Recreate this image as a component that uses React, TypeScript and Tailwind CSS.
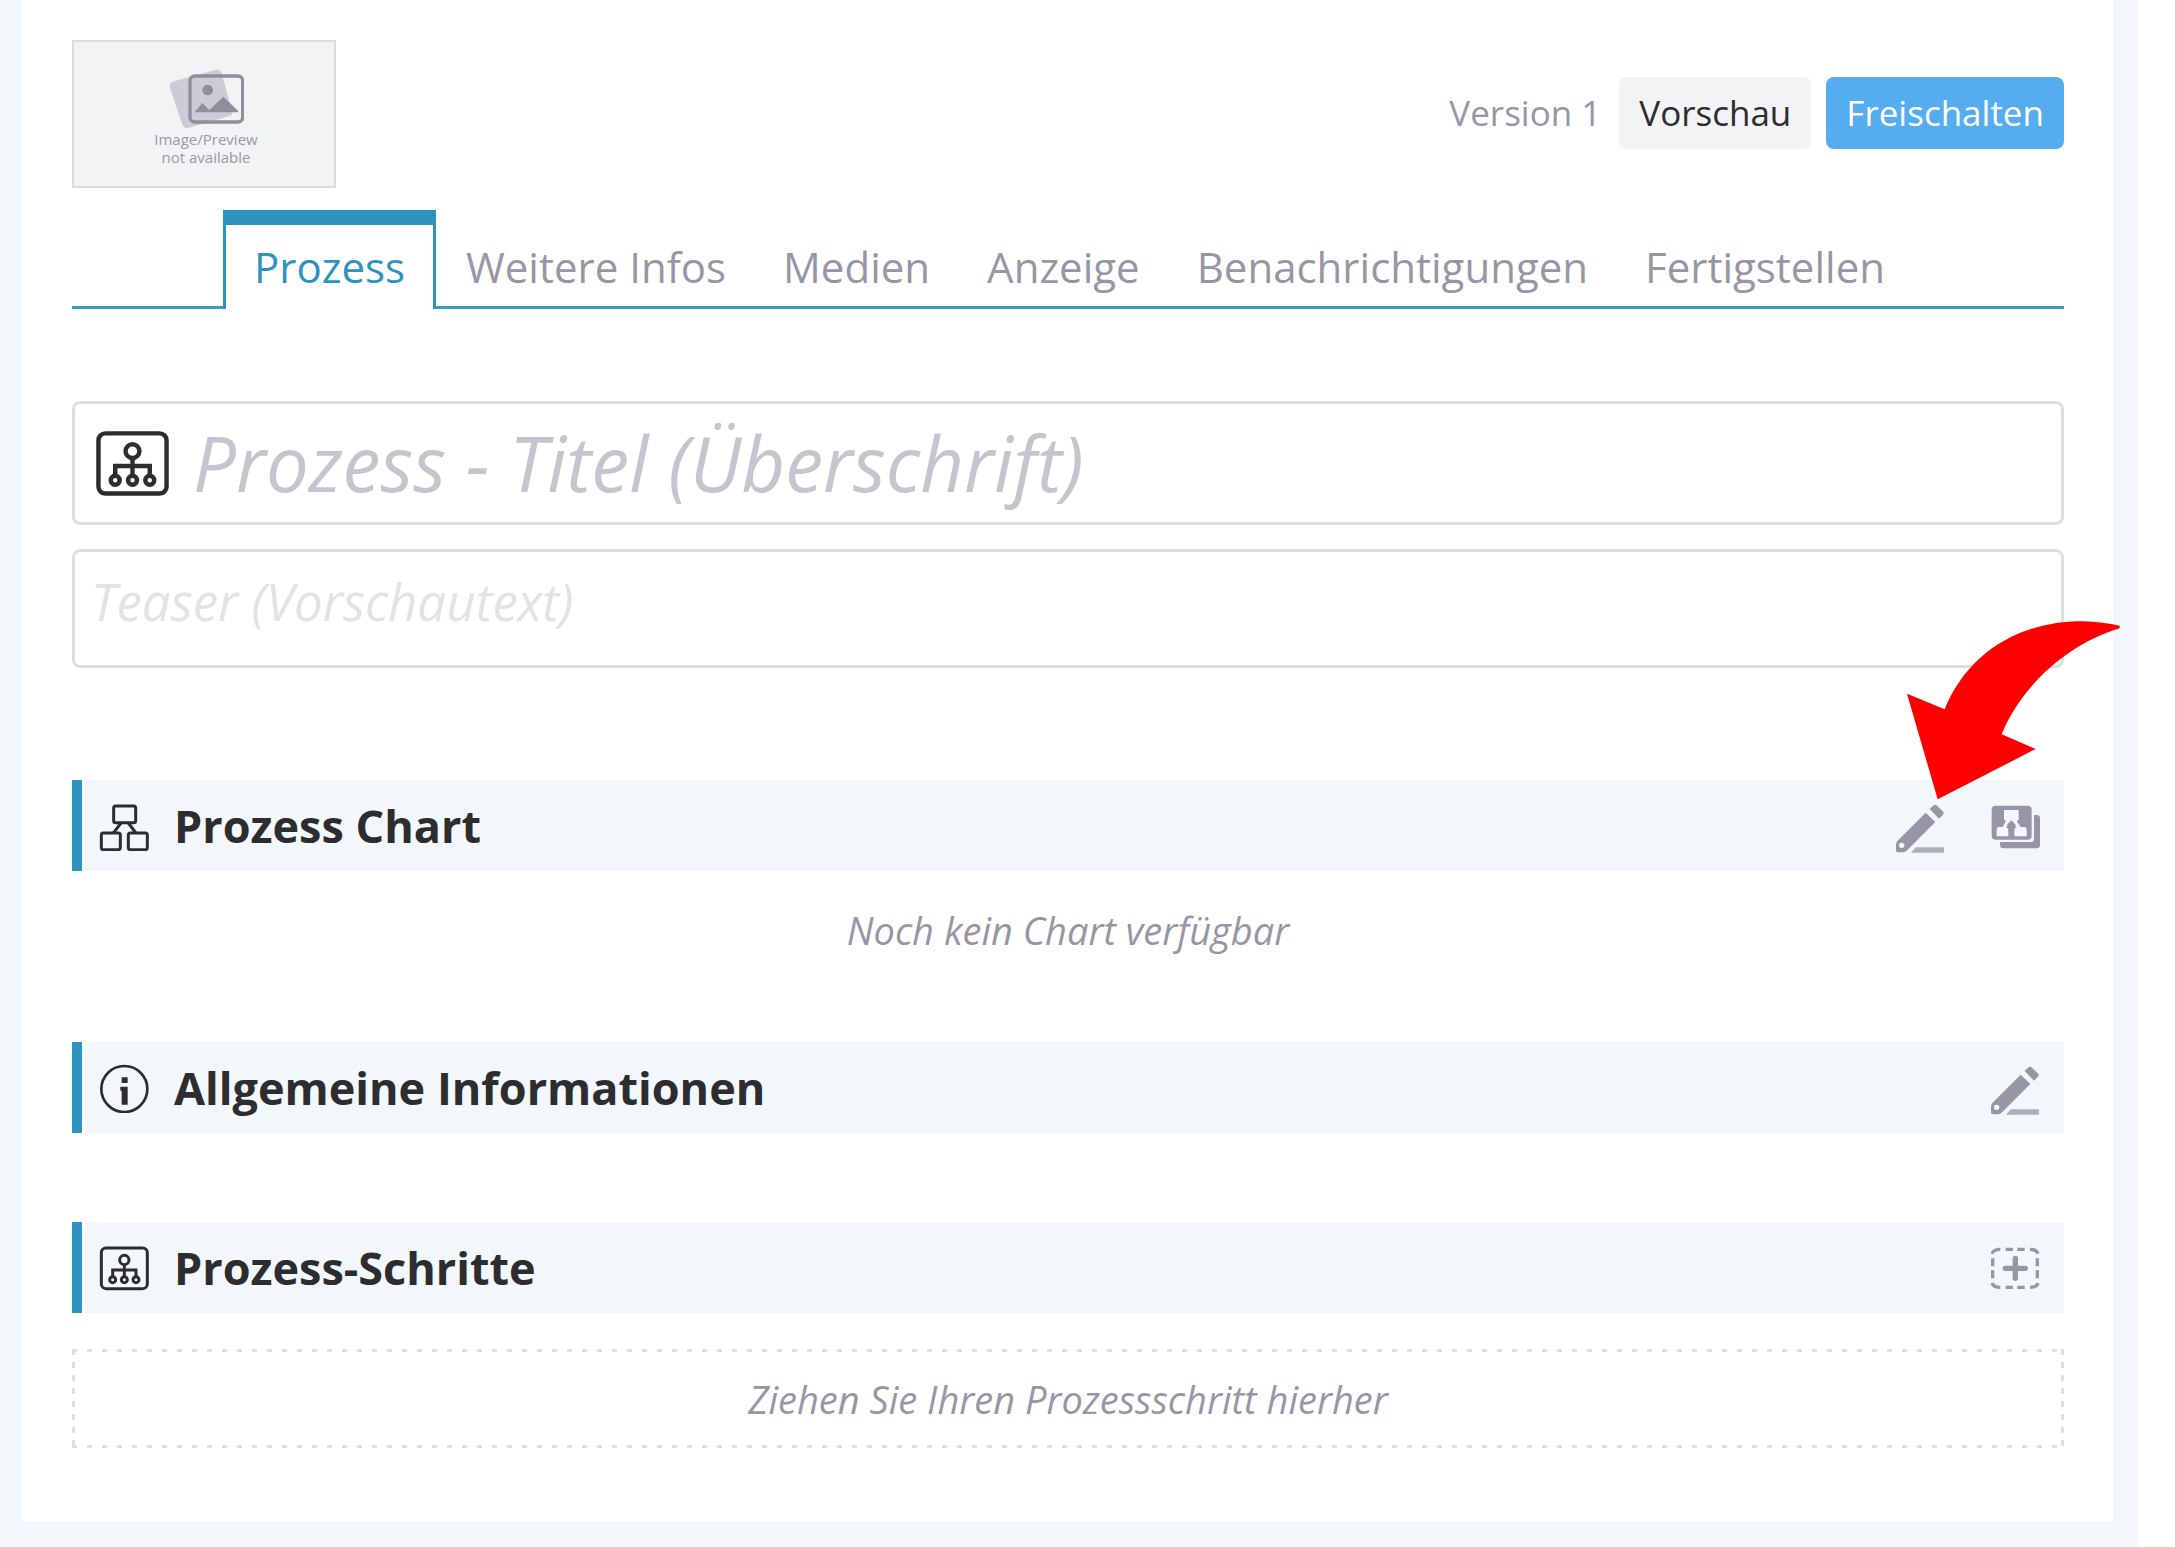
import type { ReactNode } from "react";

const tabs = ["Prozess", "Weitere Infos", "Medien", "Anzeige", "Benachrichtigungen", "Fertigstellen"];

function StepsIcon({ className }: { className: string }) {
  return (
    <svg viewBox="0 6 150 150" className={className} fill="none" stroke="currentColor" strokeWidth="9" aria-hidden="true">
      <rect x="7" y="21" width="138" height="122" rx="14" />
      <circle cx="76" cy="57" r="14" />
      <path d="M76 71V106M41 106V87H111V106" />
      <circle cx="41" cy="116" r="9" />
      <circle cx="76" cy="116" r="9" />
      <circle cx="111" cy="116" r="9" />
    </svg>
  );
}

function ChartIcon() {
  return (
    <svg viewBox="0 0 150 150" className="size-[50px] shrink-0" fill="none" stroke="currentColor" strokeWidth="9" aria-hidden="true">
      <rect x="44" y="15" width="66" height="50" rx="6" />
      <rect x="7" y="96" width="57" height="50" rx="6" />
      <rect x="88" y="96" width="57" height="50" rx="6" />
      <path d="M66 66L44 95M88 66L110 95" />
    </svg>
  );
}

function InfoIcon() {
  return (
    <svg viewBox="0 0 150 150" className="size-[50px] shrink-0" fill="currentColor" aria-hidden="true">
      <circle cx="76" cy="78" r="69" fill="none" stroke="currentColor" strokeWidth="8" />
      <path d="M68 43H86V60H68ZM64 71H86V125H68V83H64Z" />
    </svg>
  );
}

function PencilIcon() {
  return (
    <svg viewBox="0 0 150 150" className="size-[50px] overflow-visible" fill="currentColor" aria-hidden="true">
      <path
        fillRule="evenodd"
        d="M92 35L121 63L37 147Q31 154 25 154H10Q3 154 3 148V130Q3 124 9 118ZM20 125A8 8 0 1 0 20 141A8 8 0 1 0 20 125Z"
      />
      <path d="M104 24L114 14Q120 9 126 14L143 31Q149 36 143 42L132 53Z" />
      <path d="M63 139H147V155H48Z" opacity="0.75" />
    </svg>
  );
}

function GalleryIcon() {
  return (
    <svg viewBox="0 0 150 150" className="size-[50px]" fill="currentColor" aria-hidden="true">
      <path d="M132 42H140Q150 42 150 52V132Q150 142 140 142H40Q30 142 30 132V123H122Q132 123 132 113Z" />
      <path
        fillRule="evenodd"
        d="M17 14H113Q125 14 125 26V104Q125 116 113 116H17Q5 116 5 104V26Q5 14 17 14ZM42 27V56L48 60L38 78H26Q20 78 20 86V106H55V84L49 78L58 66H70L79 78L73 84V106H110V86Q110 78 102 78H92L80 60L86 56V27Z"
      />
      <path d="M64 58L78 72H72V90H56V72H50Z" />
    </svg>
  );
}

function AddIcon() {
  return (
    <svg viewBox="0 0 150 150" className="size-[50px]" fill="none" stroke="currentColor" strokeWidth="10" aria-hidden="true">
      <path d="M6 32Q10 19 31 19M47 19H69M82 19H104M120 19Q140 19 144 32M142 46V70M142 82V106M144 120Q140 133 120 133M104 133H82M69 133H47M31 133Q10 133 6 120M8 106V82M8 70V46" />
      <path d="M46 76H106M76 46V106" strokeWidth="16" strokeLinecap="round" />
    </svg>
  );
}

function Arrow() {
  return (
    <svg
      viewBox="171 62 639 537"
      className="pointer-events-none absolute -top-[159px] -right-14 h-[179px] w-[213px]"
      fill="#ff0000"
      aria-hidden="true"
    >
      <path d="M263 597L171 280L284 327C352 160 505 62 700 63Q760 65 809 76V84C655 130 515 255 455 402L557 446Z" />
    </svg>
  );
}

function SectionBar({ icon, title, children }: { icon: ReactNode; title: string; children: ReactNode }) {
  return (
    <div className="relative flex gap-[3px]">
      <span className="w-[10px] bg-[#2f93bf]" />
      <div className="flex flex-1 items-center gap-[25px] bg-[#f1f7fa] py-4 pr-6 pl-[14px] text-[#2d2d2f]">
        {icon}
        <h2 className="flex-1 text-[45px] leading-[59px] font-bold">{title}</h2>
        <div className="flex gap-[45px] text-[#9896a6]">{children}</div>
      </div>
    </div>
  );
}

export default function App() {
  return (
    <div className="min-h-screen bg-white pr-[37px] font-['Open_Sans',sans-serif]">
      <div className="min-h-screen bg-[#f1f7fa] pr-[25px] pb-[25px] pl-[22px]">
        <main className="bg-white px-[50px] pt-10 pb-[74px] pr-[49px]">
          <header className="flex items-start justify-between">
            <div className="flex h-[148px] w-[264px] flex-col items-center border-2 border-[#dcdcdc] bg-[#f2f3f5] pt-[26px] pl-1 text-[#9a99a5]">
              <svg viewBox="0 0 228 186" className="h-[62px] w-[76px]" aria-hidden="true">
                <path d="M18 40L144 5Q156 2 160 13L192 128Q195 140 185 144L60 180Q48 183 44 172L6 60Q3 45 18 40Z" fill="#cccbd8" />
                <rect x="66" y="24" width="158" height="138" rx="14" fill="none" stroke="#8f8e9b" strokeWidth="10" />
                <circle cx="119" cy="66" r="16" fill="#8f8e9b" />
                <path d="M80 132L103 105L124 126L166 86L210 128V133H80Z" fill="#8f8e9b" />
              </svg>
              <p className="text-center text-[15px] leading-[18px]">
                Image/Preview
                <br />
                not available
              </p>
            </div>
            <div className="flex items-center pt-[37px] text-[35px] leading-[48px]">
              <span className="mr-[18px] text-[#9896a6]">Version 1</span>
              <button type="button" className="mr-[15px] rounded-lg bg-[#f2f3f5] px-5 py-3 text-[#2d2d2f]">
                Vorschau
              </button>
              <button type="button" className="rounded-lg bg-[#55acee] px-5 py-3 text-white">
                Freischalten
              </button>
            </div>
          </header>

          <nav className="mt-[22px] flex text-[42px] leading-[58px] text-[#9896a6]">
            <span className="w-[151px] border-b-3 border-[#3a9dc4]" />
            {tabs.map((tab, i) =>
              i === 0 ? (
                <a key={tab} href="#prozess" aria-current="page" className="border-x-3 border-t-15 border-[#2f93bf] px-7 pt-[13px] pb-[13px] text-[#2f93bf]">
                  {tab}
                </a>
              ) : (
                <a key={tab} href={"#" + tab.toLowerCase().replace(" ", "-")} className="border-b-3 border-[#3a9dc4] pt-7 pr-[27px] pb-[10px] pl-[30px]">
                  {tab}
                </a>
              ),
            )}
            <span className="flex-1 border-b-3 border-[#3a9dc4]" />
          </nav>

          <label className="mt-[92px] flex h-[124px] items-center gap-6 rounded-lg border-3 border-[#dedede] pr-5 pl-5">
            <StepsIcon className="size-[74px] shrink-0 text-[#2d2d2f]" />
            <input
              type="text"
              aria-label="Prozess - Titel (Überschrift)"
              placeholder="Prozess - Titel (Überschrift)"
              className="min-w-0 flex-1 text-[76px] leading-[98px] italic outline-none placeholder:text-[#c5c4cf]"
            />
          </label>
          <textarea
            rows={1}
            aria-label="Teaser (Vorschautext)"
            placeholder="Teaser (Vorschautext)"
            className="mt-6 block h-[119px] w-full resize-none rounded-lg border-3 border-[#dedede] px-4 py-4 text-[51px] leading-[66px] italic outline-none placeholder:text-[#e2e2e7]"
          />

          <section className="mt-[112px]">
            <SectionBar icon={<ChartIcon />} title="Prozess Chart">
              <button type="button" aria-label="Chart bearbeiten">
                <PencilIcon />
              </button>
              <button type="button" aria-label="Chart auswählen">
                <GalleryIcon />
              </button>
              <Arrow />
            </SectionBar>
            <p className="mt-[35px] text-center text-[38px] leading-[48px] text-[#9896a6] italic">Noch kein Chart verfügbar</p>
          </section>

          <section className="mt-[88px]">
            <SectionBar icon={<InfoIcon />} title="Allgemeine Informationen">
              <button type="button" aria-label="Informationen bearbeiten">
                <PencilIcon />
              </button>
            </SectionBar>
          </section>

          <section className="mt-[89px]">
            <SectionBar icon={<StepsIcon className="size-[50px] shrink-0" />} title="Prozess-Schritte">
              <button type="button" aria-label="Schritt hinzufügen">
                <AddIcon />
              </button>
            </SectionBar>
            <p className="mt-9 bg-[image:linear-gradient(90deg,#dedede_5px,transparent_5px),linear-gradient(90deg,#dedede_5px,transparent_5px),linear-gradient(#dedede_6px,transparent_6px),linear-gradient(#dedede_6px,transparent_6px)] bg-[length:15px_3px,15px_3px,3px_13px,3px_13px] [background-position:left_top,left_bottom,left_top,right_top] [background-repeat:repeat-x,repeat-x,repeat-y,repeat-y] pt-[26px] pb-[25px] text-center text-[38px] leading-[48px] text-[#9896a6] italic">
              Ziehen Sie Ihren Prozessschritt hierher
            </p>
          </section>
        </main>
      </div>
    </div>
  );
}
